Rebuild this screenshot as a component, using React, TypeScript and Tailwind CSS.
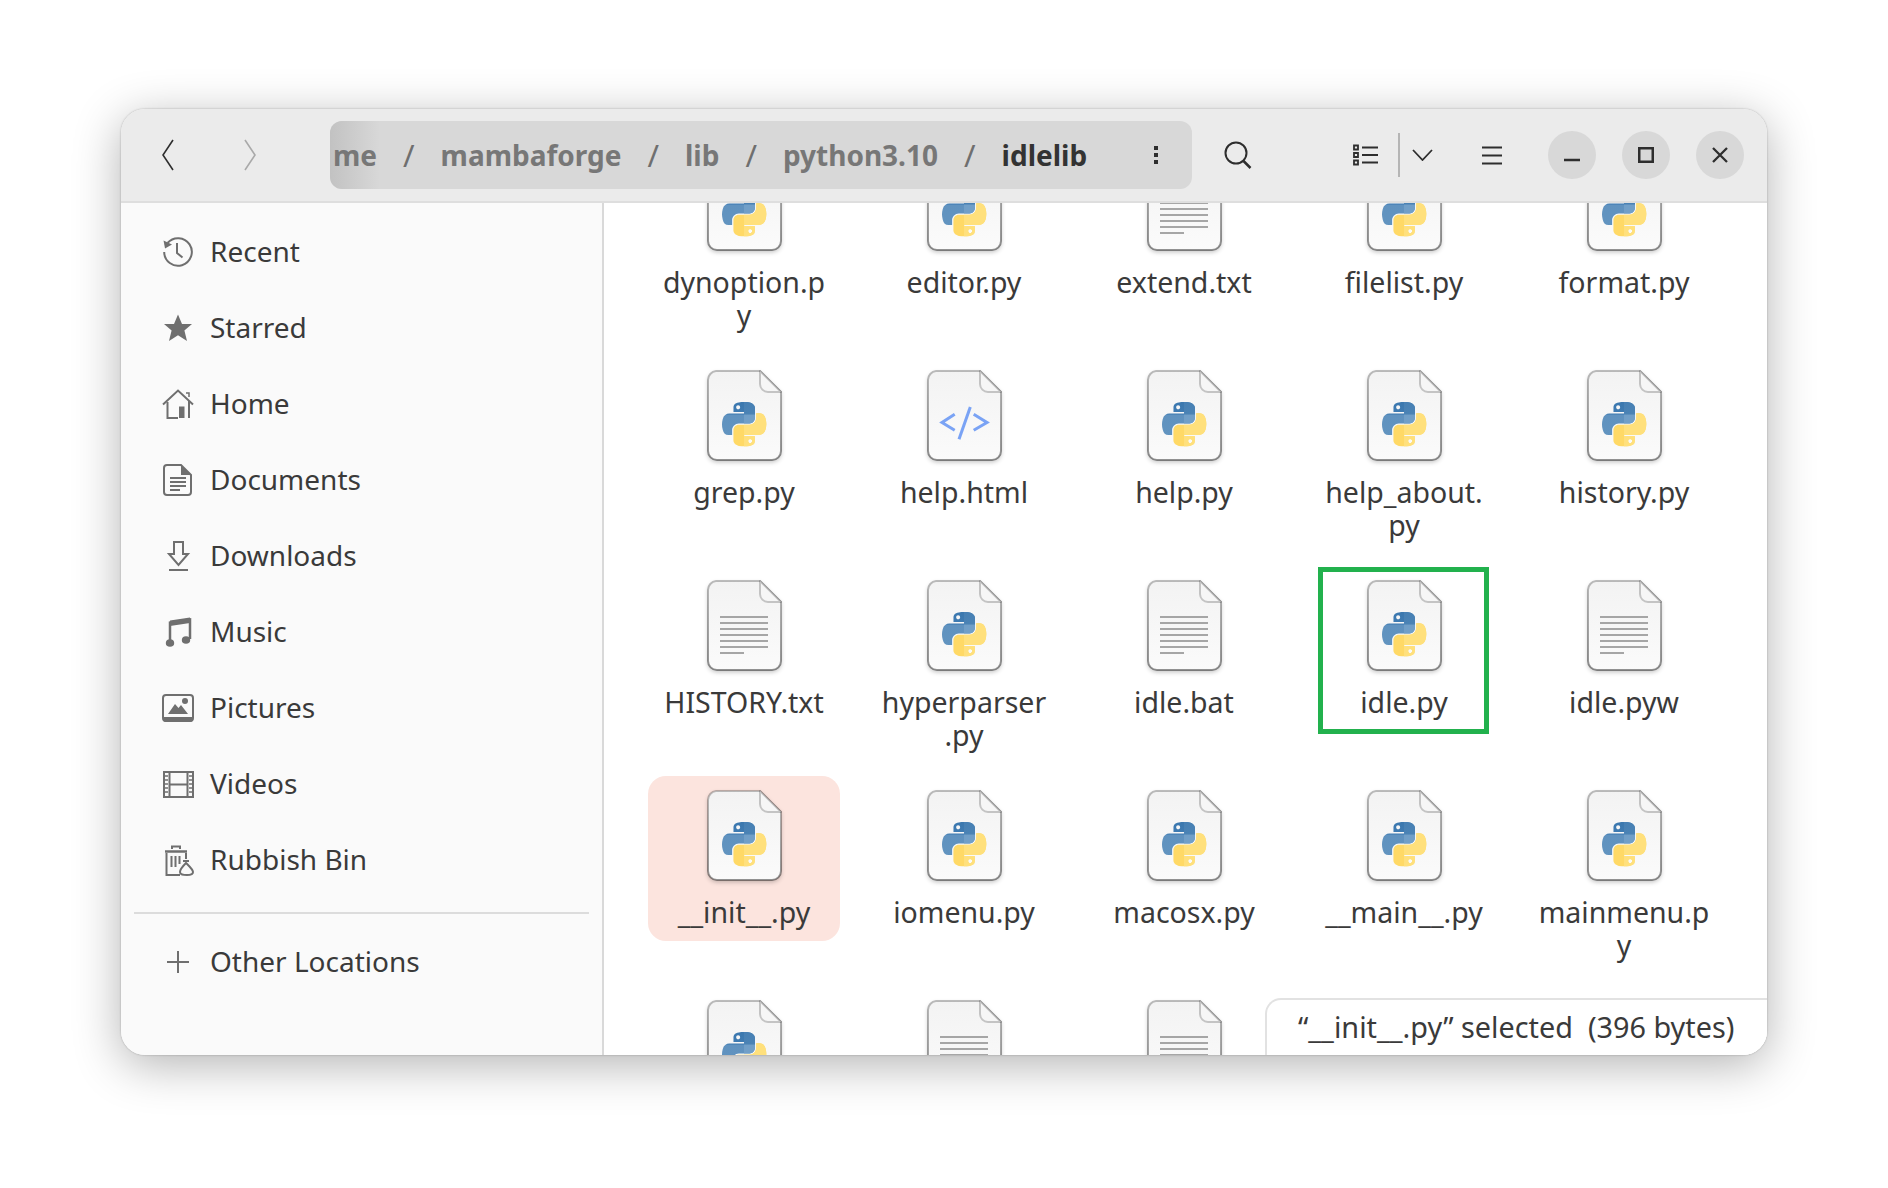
const BLUE =
  "M54.9 0C50.3 0 46 .4 42.1 1.1 30.8 3.1 28.7 7.3 28.7 15V25.2H55.5V28.6H18.6C10.8 28.6 4 33.3 1.9 42.2-.6 52.4-.7 58.7 1.9 69.3 3.8 77.2 8.3 82.8 16.1 82.8H25.3V70.5C25.3 61.6 33 53.8 42.1 53.8H68.9C76.3 53.8 82.3 47.6 82.3 40.2V15C82.3 7.9 76.2 2.5 68.9 1.1 64.3.3 59.5 0 54.9 0ZM40.4 8.2C43.2 8.2 45.4 10.5 45.4 13.3 45.4 16.1 43.2 18.4 40.4 18.4 37.6 18.4 35.4 16.1 35.4 13.3 35.4 10.5 37.6 8.2 40.4 8.2Z";

const PythonLogo = () => (
  <g transform="translate(15 32) scale(0.4)">
    <path d={BLUE} fill="url(#pyBlue)" fillRule="evenodd" />
    <path d={BLUE} fill="#ffd966" fillRule="evenodd" transform="rotate(180 55.4 55.4)" />
    <g clipPath="url(#pyRight)">
      <path d={BLUE} fill="url(#pyBlueLight)" fillRule="evenodd" />
      <path d={BLUE} fill="#ffe07c" fillRule="evenodd" transform="rotate(180 55.4 55.4)" />
    </g>
  </g>
);

const TextLines = () => (
  <g stroke="#a6a6a6" strokeWidth="2">
    {[37, 43, 49, 55, 61, 67].map((y) => (
      <path key={y} d={`M13 ${y}H61`} />
    ))}
    <path d="M13 73H37" />
  </g>
);

const CodeGlyph = () => (
  <g stroke="#7aa3f5" strokeWidth="3" fill="none">
    <path d="M27.7 44.3 15 52.5l12.7 7.7" />
    <path d="M46.7 44.3 60 52.5l-13.3 7.700" />
    <path d="M43.3 37 32 69.3" />
  </g>
);

const FileIcon = ({ kind }: { kind: "py" | "txt" | "html" }) => (
  <svg
    width="75"
    height="91"
    viewBox="0 0 75 91"
    className="shrink-0 overflow-visible drop-shadow-[0_2px_2px_rgba(0,0,0,0.22)]"
  >
    <defs>
      <linearGradient id="pageFill" x1="0" y1="0" x2="0" y2="1">
        <stop offset="0" stopColor="#f3f3f3" />
        <stop offset="1" stopColor="#fbfbfb" />
      </linearGradient>
      <linearGradient id="pageEdge" x1="0" y1="0" x2="0" y2="1">
        <stop offset="0" stopColor="#000" stopOpacity="0.24" />
        <stop offset="1" stopColor="#000" stopOpacity="0.42" />
      </linearGradient>
      <linearGradient id="pyBlue" gradientUnits="userSpaceOnUse" x1="0" y1="0" x2="0" y2="84">
        <stop offset="0" stopColor="#3b78af" />
        <stop offset="0.35" stopColor="#3f7bb2" />
        <stop offset="0.4" stopColor="#6092bf" />
        <stop offset="1" stopColor="#6294c0" />
      </linearGradient>
      <linearGradient id="pyBlueLight" gradientUnits="userSpaceOnUse" x1="0" y1="0" x2="0" y2="84">
        <stop offset="0" stopColor="#4780b4" />
        <stop offset="0.35" stopColor="#4b83b5" />
        <stop offset="0.4" stopColor="#719fc8" />
        <stop offset="1" stopColor="#719fc8" />
      </linearGradient>
      <clipPath id="pyRight">
        <rect x="55" y="-5" width="60" height="120" />
      </clipPath>
    </defs>
    <path
      d="M9 1H53L74 22V81a9 9 0 0 1-9 9H10a9 9 0 0 1-9-9V10a9 9 0 0 1 8-9Z"
      fill="url(#pageFill)"
      stroke="url(#pageEdge)"
      strokeWidth="2"
    />
    <path
      d="M53 1V14a8 8 0 0 0 8 8H74Z"
      fill="#f6f6f6"
      stroke="#000"
      strokeOpacity="0.2"
      strokeWidth="2"
      strokeLinejoin="round"
    />
    {kind === "py" && <PythonLogo />}
    {kind === "txt" && <TextLines />}
    {kind === "html" && <CodeGlyph />}
  </svg>
);

const Glyph = ({ children }: { children: React.ReactNode }) => (
  <svg width="32" height="32" viewBox="0 0 32 32" fill="none" stroke="#6f6f6f" strokeWidth="2" className="shrink-0">
    {children}
  </svg>
);

const sidebar = [
  {
    label: "Recent",
    icon: (
      <Glyph>
        <path d="M5.5 7A13.8 13.8 0 1 1 2.2 16" />
        <path d="M1.5 4.5 10 8.5 3 12.5Z" fill="#6f6f6f" stroke="none" />
        <path d="M15 7V17L20.5 21.5" />
      </Glyph>
    ),
  },
  {
    label: "Starred",
    icon: (
      <Glyph>
        <path d="M16 2.5 20 12H30L22.4 18.6 25 29 16 23.2 7 29 9.6 18.6 2 12H12Z" fill="#6f6f6f" stroke="none" />
      </Glyph>
    ),
  },
  {
    label: "Home",
    icon: (
      <Glyph>
        <path d="M1 16.5 16 2.5 31 16.5" />
        <path d="M5.5 14V30H16" />
        <path d="M27 13V30" />
        <path d="M17 18.5H22.5V30H17Z" fill="#6f6f6f" stroke="none" />
        <path d="M24 5H27V9" strokeWidth="1.5" />
      </Glyph>
    ),
  },
  {
    label: "Documents",
    icon: (
      <Glyph>
        <path d="M5 1H19L29 11V28a3 3 0 0 1-3 3H5a3 3 0 0 1-3-3V4a3 3 0 0 1 3-3Z" />
        <path d="M19 1 29 11H19Z" fill="#6f6f6f" stroke="none" />
        <path d="M8 14H24M8 18H24M8 22H24M8 26H18" />
      </Glyph>
    ),
  },
  {
    label: "Downloads",
    icon: (
      <Glyph>
        <path d="M12 2H21V14H26L16.5 25 7 14H12Z" />
        <path d="M7 30H26" />
      </Glyph>
    ),
  },
  {
    label: "Music",
    icon: (
      <Glyph>
        <path d="M8 27V6.5L28 3.5V23" strokeWidth="2.5" />
        <path d="M8 4.5 28 1.5V7L8 10Z" fill="#6f6f6f" stroke="none" />
        <ellipse cx="8" cy="27" rx="4.2" ry="3.8" fill="#6f6f6f" stroke="none" />
        <ellipse cx="24" cy="24" rx="4.2" ry="3.8" fill="#6f6f6f" stroke="none" />
      </Glyph>
    ),
  },
  {
    label: "Pictures",
    icon: (
      <Glyph>
        <rect x="1" y="3" width="30" height="26" rx="3" />
        <path d="M1 25H31V27a3 3 0 0 1-3 3H4a3 3 0 0 1-3-3Z" fill="#6f6f6f" stroke="none" />
        <path d="M6 22 13 12 16.5 16 19 13 26 22Z" fill="#6f6f6f" stroke="none" />
        <circle cx="23" cy="9" r="3" fill="#6f6f6f" stroke="none" />
      </Glyph>
    ),
  },
  {
    label: "Videos",
    icon: (
      <Glyph>
        <path d="M2 4H31V29H2Z" />
        <path d="M7.5 4V29M25.5 4V29M7.5 16.5H25.5" />
        <path
          d="M3 8H6M3 12H6M3 16H6M3 20H6M3 24H6M27 8H30M27 12H30M27 16H30M27 20H30M27 24H30"
          stroke="#6f6f6f"
          strokeWidth="1.5"
        />
      </Glyph>
    ),
  },
  {
    label: "Rubbish Bin",
    icon: (
      <Glyph>
        <path d="M3 7.5H25" strokeWidth="2.5" />
        <path d="M10 5V2.5H18V5" />
        <path d="M4.5 9V31H18" />
        <path d="M24 9V15" />
        <path d="M9.5 12V23M13.5 12V23M17.5 12V20" />
        <path d="M24 19C21 22 18 25 18 28S21 31 25 31 31 30.500 31 28 27 22 24 19Z" fill="#fafafa" />
        <path d="M21 17H27" />
      </Glyph>
    ),
  },
];

const files: { name: string; kind: "py" | "txt" | "html" }[] = [
  { name: "dynoption.p\ny", kind: "py" },
  { name: "editor.py", kind: "py" },
  { name: "extend.txt", kind: "txt" },
  { name: "filelist.py", kind: "py" },
  { name: "format.py", kind: "py" },
  { name: "grep.py", kind: "py" },
  { name: "help.html", kind: "html" },
  { name: "help.py", kind: "py" },
  { name: "help_about.\npy", kind: "py" },
  { name: "history.py", kind: "py" },
  { name: "HISTORY.txt", kind: "txt" },
  { name: "hyperparser\n.py", kind: "py" },
  { name: "idle.bat", kind: "txt" },
  { name: "idle.py", kind: "py" },
  { name: "idle.pyw", kind: "txt" },
  { name: "__init__.py", kind: "py" },
  { name: "iomenu.py", kind: "py" },
  { name: "macosx.py", kind: "py" },
  { name: "__main__.py", kind: "py" },
  { name: "mainmenu.p\ny", kind: "py" },
  { name: "", kind: "py" },
  { name: "", kind: "txt" },
  { name: "", kind: "txt" },
];

const Slash = () => <span className="text-[31px] font-normal text-[#6f6f6f]">/</span>;

const HeaderIcon = ({ w, h, children }: { w: number; h: number; children: React.ReactNode }) => (
  <svg width={w} height={h} viewBox={`0 0 ${w} ${h}`} fill="none" stroke="#2e2e2e" strokeWidth="2" className="shrink-0">
    {children}
  </svg>
);

const WindowButton = ({ children }: { children: React.ReactNode }) => (
  <div className="flex h-12 w-12 items-center justify-center rounded-full bg-[#d8d8d8]">{children}</div>
);

export default function App() {
  return (
    <div className="h-[1188px] w-[1888px] overflow-hidden bg-white pl-[121px] pt-[109px] font-['Noto_Sans',sans-serif] text-[#3a3a3a]">
      <div className="flex h-[946px] w-[1646px] flex-col overflow-hidden rounded-[24px] bg-white shadow-[0_0_2px_rgba(0,0,0,0.3),0_10px_48px_rgba(0,0,0,0.3)]">
        <header className="flex h-[94px] shrink-0 items-center border-b-2 border-[#dedede] bg-[#ebebeb]">
          <div className="ml-[41px] flex w-[168px] items-center">
            <svg width="12" height="32" viewBox="0 0 12 32" fill="none" stroke="#2e2e2e" strokeWidth="1.6">
              <path d="M11 1 1 16l10 15" />
            </svg>
            <svg width="12" height="32" viewBox="0 0 12 32" fill="none" stroke="#a9a9a9" strokeWidth="1.6" className="ml-[70px]">
              <path d="M1 1 11 16 1 31" />
            </svg>
          </div>
          <div className="relative flex h-[68px] w-[862px] items-center overflow-hidden rounded-xl bg-[#d8d8d8] text-[28px] font-bold text-[#777777]">
            <div className="absolute inset-y-0 left-0 w-[50px] bg-gradient-to-r from-[#c2c2c2] to-transparent" />
            <div className="relative flex items-center gap-[26px] pl-[3px]">
              <span>me</span>
              <Slash />
              <span>mambaforge</span>
              <Slash />
              <span>lib</span>
              <Slash />
              <span>python3.10</span>
              <Slash />
              <span className="text-[#333333]">idlelib</span>
            </div>
            <svg width="6" height="20" viewBox="0 0 6 20" className="absolute left-[823px] top-[24px]" fill="#2e2e2e">
              <rect x="1" y="1" width="4" height="4" />
              <rect x="1" y="8" width="4" height="4" />
              <rect x="1" y="15" width="4" height="4" />
            </svg>
          </div>
          <div className="ml-[32px] w-[28px]">
            <HeaderIcon w={28} h={28}>
              <circle cx="12" cy="12" r="10.5" />
              <path d="M19.500 20 26.500 27" strokeWidth="2.500" />
            </HeaderIcon>
          </div>
          <div className="ml-[101px] flex items-center">
            <HeaderIcon w={25} h={22}>
              <path d="M1 1.500H5V5.500H1ZM1 9H5V13H1ZM1 16.500H5V20.500H1Z" strokeWidth="1.800" />
              <path d="M9 3.500H25M9 11H25M9 18.500H25" />
            </HeaderIcon>
            <div className="ml-[20px] h-[44px] w-[1.5px] bg-[#b5b5b5]" />
            <div className="ml-[12px]">
              <HeaderIcon w={21} h={12}>
                <path d="M1 1 10.500 11 20 1" strokeWidth="1.800" />
              </HeaderIcon>
            </div>
            <div className="ml-[49px]">
              <HeaderIcon w={20} h={19}>
                <path d="M0 1.500H20M0 9.500H20M0 17.500H20" />
              </HeaderIcon>
            </div>
          </div>
          <div className="ml-[46px] flex gap-[26px]">
            <WindowButton>
              <svg width="16" height="24" viewBox="0 0 16 24" stroke="#2e2e2e" strokeWidth="2.500">
                <path d="M0 17H16" />
              </svg>
            </WindowButton>
            <WindowButton>
              <HeaderIcon w={16} h={16}>
                <rect x="1.250" y="1.250" width="13.500" height="13.500" strokeWidth="2.500" />
              </HeaderIcon>
            </WindowButton>
            <WindowButton>
              <HeaderIcon w={16} h={16}>
                <path d="M1 1 15 15M15 1 1 15" strokeWidth="2.300" />
              </HeaderIcon>
            </WindowButton>
          </div>
        </header>

        <div className="flex min-h-0 flex-1">
          <aside className="flex w-[483px] shrink-0 flex-col border-r-2 border-[#d9d9d9] bg-[#fafafa] pt-[10px] text-[28px]">
            {sidebar.map((item) => (
              <div key={item.label} className="flex h-[76px] items-center gap-[16px] pl-[41px]">
                <div className="mt-[2px]">{item.icon}</div>
                <span>{item.label}</span>
              </div>
            ))}
            <div className="mx-[13px] mb-[9px] mt-[15px] h-[2px] bg-[#dcdcdc]" />
            <div className="flex h-[76px] items-center gap-[16px] pl-[41px]">
              <div className="mt-[2px]">
                <Glyph>
                  <path d="M16 5V27M5 16H27" />
                </Glyph>
              </div>
              <span>Other Locations</span>
            </div>
          </aside>

          <main className="relative min-w-0 flex-1 overflow-hidden bg-white">
            <div className="-mt-[57px] ml-[44px] grid auto-rows-[210px] grid-cols-[repeat(5,192px)] gap-x-[28px] text-[28.5px]">
              {files.map((file, i) => (
                <div
                  key={i}
                  className={`relative flex flex-col items-center self-start rounded-[18px] pb-[12px] pt-[14px] ${
                    file.name === "__init__.py" ? "bg-[#fce4de]" : ""
                  }`}
                >
                  <FileIcon kind={file.kind} />
                  <div className="mt-[15px] whitespace-pre text-center leading-[33px]">{file.name}</div>
                  {file.name === "idle.py" && (
                    <div className="absolute left-[10px] top-px h-[167px] w-[171px] border-[5px] border-[#22b14d]" />
                  )}
                </div>
              ))}
            </div>
            <div className="absolute bottom-0 right-0 h-[57px] w-[502px] whitespace-pre rounded-tl-[16px] border-l-2 border-t-2 border-[#e2e2e2] bg-white pl-[31px] pt-[5px] text-[28.8px]">
              {"“__init__.py” selected  (396 bytes)"}
            </div>
          </main>
        </div>
      </div>
    </div>
  );
}
